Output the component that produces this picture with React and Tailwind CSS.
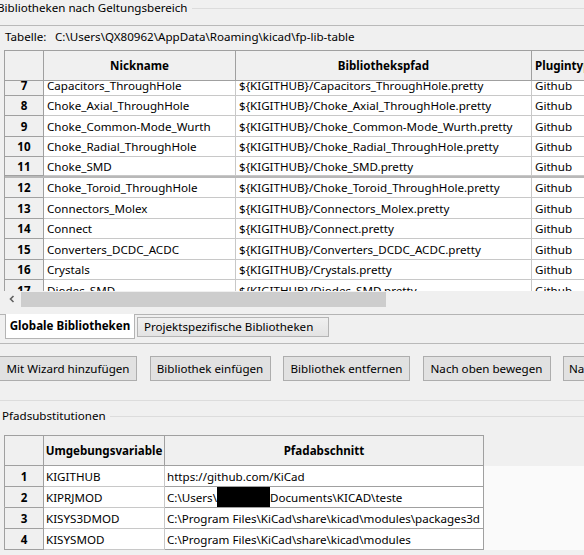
import React from 'react';

const libs = [
  [7, 'Capacitors_ThroughHole'],
  [8, 'Choke_Axial_ThroughHole'],
  [9, 'Choke_Common-Mode_Wurth'],
  [10, 'Choke_Radial_ThroughHole'],
  [11, 'Choke_SMD'],
  [12, 'Choke_Toroid_ThroughHole'],
  [13, 'Connectors_Molex'],
  [14, 'Connect'],
  [15, 'Converters_DCDC_ACDC'],
  [16, 'Crystals'],
  [17, 'Diodes_SMD'],
];

const subst = [
  [1, 'KIGITHUB', 'https://github.com/KiCad'],
  [2, 'KIPRJMOD', null],
  [3, 'KISYS3DMOD', 'C:\\Program Files\\KiCad\\share\\kicad\\modules\\packages3d'],
  [4, 'KISYSMOD', 'C:\\Program Files\\KiCad\\share\\kicad\\modules'],
];

const buttons = [
  ['Mit Wizard hinzufügen', 'w-[138px] -ml-px'],
  ['Bibliothek einfügen', 'w-[121px]'],
  ['Bibliothek entfernen', 'w-[127px]'],
  ['Nach oben bewegen', 'w-[128px]'],
  ['Nach unten bewegen', 'w-[128px]'],
];

export default function App() {
  return (
    <div className="w-[584px] h-[555px] overflow-hidden bg-[#f0f0f0] text-[11.6px] leading-[16px] text-black font-['Noto_Sans','Liberation_Sans',sans-serif]">
      {/* Groupbox: Bibliotheken */}
      <div className="flex items-center h-[16px]">
        <span className="-ml-[3px] pr-1 whitespace-nowrap">Bibliotheken nach Geltungsbereich</span>
        <div className="flex-1 border-t border-[#dcdcdc]" />
      </div>
      <div className="mt-[9px] border-t border-[#b9b9b9]" />
      <div className="flex h-[16px] mt-[3px] whitespace-nowrap">
        <span className="ml-[5px] w-[50px]">Tabelle:</span>
        <span>C:\Users\QX80962\AppData\Roaming\kicad\fp-lib-table</span>
      </div>

      {/* Library grid */}
      <div className="mt-[5px] ml-[4px] overflow-hidden">
        <div className="grid grid-cols-[39px_192px_296px_90px] h-[31px] border-t border-l border-[#a0a0a0] font-bold">
          <div className="border-r border-b border-[#a0a0a0]" />
          <div className="border-r border-b border-[#a0a0a0] flex items-center justify-center">Nickname</div>
          <div className="border-r border-b border-[#a0a0a0] flex items-center justify-center">Bibliothekspfad</div>
          <div className="border-r border-b border-[#a0a0a0] flex items-center pl-[3px] whitespace-nowrap">Plugintyp</div>
        </div>
        <div className="h-[210px] overflow-hidden border-l border-[#a0a0a0]">
          <div className="-mt-[6px]">
            {libs.map(([n, name]) => (
              <div
                key={n}
                className={`grid grid-cols-[39px_192px_296px_90px] h-[20.5px] ${n === 11 ? 'border-b-2 border-[#b8b8b8]' : ''}`}
              >
                <div className="border-r border-b border-[#a0a0a0] bg-[#f0f0f0] font-bold flex items-center justify-center pt-[2px]">{n}</div>
                <div className="border-r border-b border-[#c8c8c8] bg-white flex items-center pl-[3px] pt-[2px] whitespace-nowrap">{name}</div>
                <div className="border-r border-b border-[#c8c8c8] bg-white flex items-center pl-[3px] pt-[2px] whitespace-nowrap">{'${KIGITHUB}/' + name + '.pretty'}</div>
                <div className="border-r border-b border-[#c8c8c8] bg-white flex items-center pl-[3px] pt-[2px]">Github</div>
              </div>
            ))}
          </div>
        </div>
        {/* horizontal scrollbar */}
        <div className="flex items-center h-[16px] bg-[#f0f0f0]">
          <div className="w-[16px] flex items-center justify-center">
            <svg width="8" height="8" viewBox="0 0 8 8">
              <path d="M5.5 1 L2.5 4 L5.5 7" fill="none" stroke="#606060" strokeWidth="1.6" />
            </svg>
          </div>
          <div className="ml-[1px] w-[365px] h-[15px] bg-[#cdcdcd]" />
        </div>
      </div>

      {/* Tabs */}
      <div className="mt-[7px] border-t border-[#b4b4b4]" />
      <div className="flex items-start -mt-px ml-[5px] h-[26px]">
        <div className="w-[130px] h-[25px] bg-white border-x border-b border-[#b4b4b4] font-bold flex items-center justify-center">
          Globale Bibliotheken
        </div>
        <div className="mt-[3px] ml-[2px] w-[192px] h-[20px] bg-gradient-to-b from-[#f0f0f0] to-[#e3e3e3] border border-[#b4b4b4] flex items-center pl-[6px] whitespace-nowrap">
          Projektspezifische Bibliotheken
        </div>
      </div>
      <div className="mt-[3px] border-t border-[#b9b9b9]" />

      {/* Buttons */}
      <div className="flex gap-[12.5px] mt-[12px] whitespace-nowrap">
        {buttons.map(([label, w]) => (
          <div
            key={label}
            className={`${w} shrink-0 h-[25px] bg-[#e1e1e1] border border-[#adadad] flex items-center justify-center`}
          >
            {label}
          </div>
        ))}
      </div>
      <div className="mt-[19px] border-t border-[#dcdcdc]" />

      {/* Groupbox: Pfadsubstitutionen */}
      <div className="flex items-center h-[16px] mt-[7px]">
        <span className="ml-[2px] pr-1">Pfadsubstitutionen</span>
        <div className="flex-1 border-t border-[#dcdcdc]" />
      </div>

      <div className="mt-[11px] ml-[4px] flex">
        <div>
          <div className="grid grid-cols-[39px_121px_319px] h-[31px] border-t border-l border-[#a0a0a0] font-bold">
            <div className="border-r border-b border-[#a0a0a0]" />
            <div className="border-r border-b border-[#a0a0a0] flex items-center justify-center">Umgebungsvariable</div>
            <div className="border-r border-b border-[#a0a0a0] flex items-center justify-center">Pfadabschnitt</div>
          </div>
          {subst.map(([n, name, path]) => (
            <div
              key={n}
              className={`grid grid-cols-[39px_121px_319px] h-[21px] border-l border-[#a0a0a0] ${n === 2 ? 'border-b-2 border-b-[#b8b8b8]' : ''}`}
            >
              <div className="border-r border-b border-[#a0a0a0] bg-[#f0f0f0] font-bold flex items-center justify-center pt-[2px]">{n}</div>
              <div className="border-r border-b border-[#c8c8c8] bg-white flex items-center pl-[2px] pt-[2px]">{name}</div>
              <div className="border-r border-b border-[#a0a0a0] bg-white flex items-center pl-[2px] whitespace-nowrap">
                {path ? (
                  <span className="pt-[2px]">{path}</span>
                ) : (
                  <>
                    <span className="pt-[2px]">C:\Users\</span>
                    <span className="inline-block w-[53px] h-[20px] bg-black" />
                    <span className="pt-[2px]">Documents\KICAD\teste</span>
                  </>
                )}
              </div>
            </div>
          ))}
        </div>
        <div className="flex-1 mt-[31px] h-[84px] bg-[#fafafa]" />
      </div>
    </div>
  );
}
